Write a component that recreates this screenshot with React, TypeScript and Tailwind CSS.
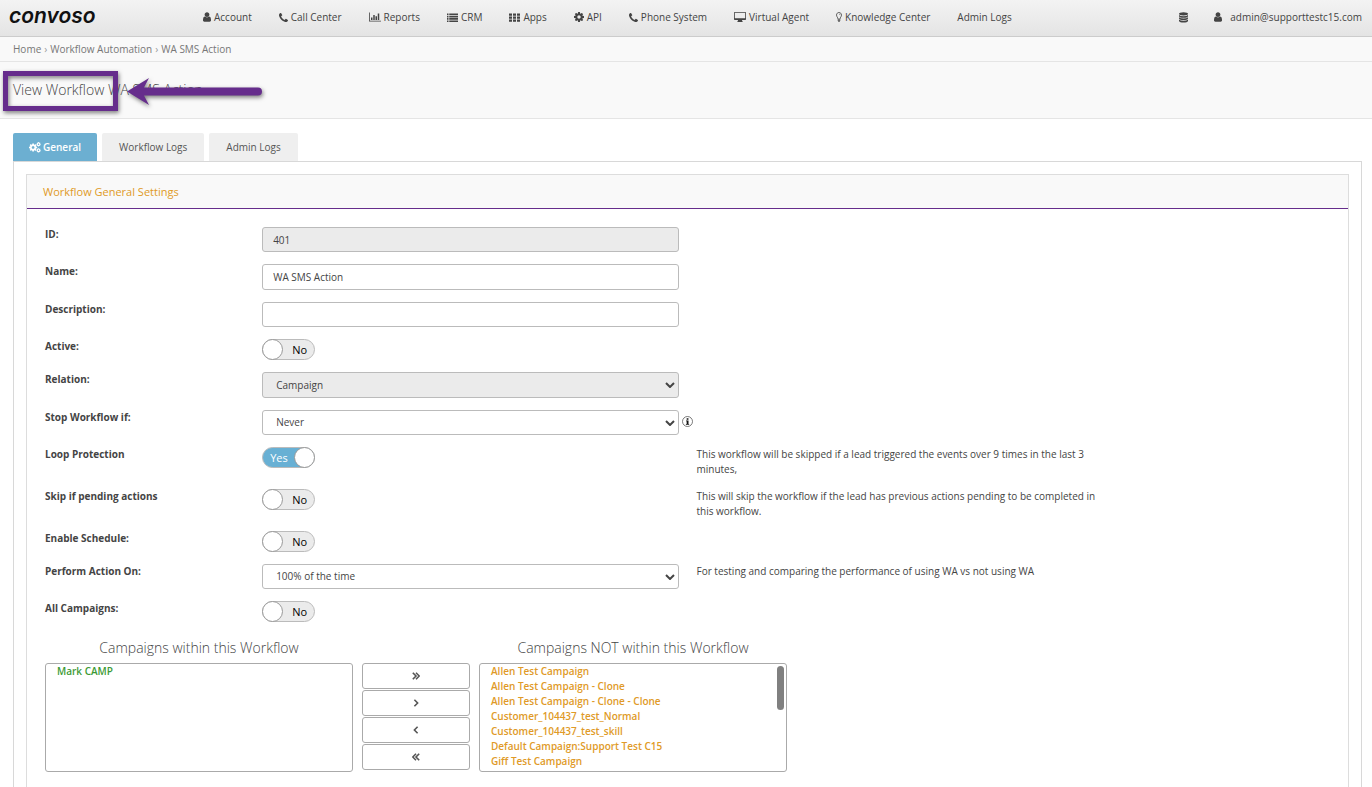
import React, { useState } from 'react';

const USER_PATH =
  'M1536 1399q0 109-62.5 187t-150.5 78h-854q-88 0-150.5-78t-62.5-187q0-85 8.5-160.5t31.5-152 58.5-131 94-89 134.5-34.5q131 128 313 128t313-128q76 0 134.5 34.5t94 89 58.5 131 31.5 152 8.5 160.5zm-256-887q0 159-112.5 271.5t-271.5 112.5-271.5-112.5-112.5-271.5 112.5-271.5 271.5-112.5 271.5 112.5 112.5 271.5z';
const PHONE_PATH =
  'M1408 1240q0 27-10 70.5t-21 68.5q-21 50-122 106-94 51-186 51-27 0-52.5-3.5t-57.5-12.5-47.5-14.5-55.5-20.5-49-18q-98-35-175-83-128-79-264.5-215.5t-215.5-264.5q-48-77-83-175-3-9-18-49t-20.5-55.5-14.5-47.5-12.5-57.5-3.5-52.5q0-92 51-186 56-101 106-122 25-11 68.5-21t70.5-10q14 0 21 3 18 6 53 76 11 19 30 54t35 63.5 31 53.5q3 4 17.5 25t21.5 35.5 7 28.5q0 20-28.5 50t-62 55-62 53-28.5 46q0 9 5 22.5t8.5 20.5 14 24 11.5 19q76 137 174 235t235 174q2 1 19 11.5t24 14 20.5 8.5 22.5 5q18 0 46-28.5t53-62 55-62 50-28.5q14 0 28.5 7t35.5 21.5 25 17.5q25 15 53.5 31t63.5 35 54 30q70 35 76 53 3 7 3 21z';
const COG_PATH =
  'M1152 896q0-106-75-181t-181-75-181 75-75 181 75 181 181 75 181-75 75-181zm512-109v222q0 12-8 23t-20 13l-185 28q-19 54-39 91 35 50 107 138 10 12 10 25t-9 23q-27 37-99 108t-94 71q-12 0-26-9l-138-108q-44 23-91 38-16 136-29 186-7 28-36 28h-222q-14 0-24.5-8.5t-11.5-21.5l-28-184q-49-16-90-37l-141 107q-10 9-25 9-14 0-25-11-126-114-165-168-7-10-7-23 0-12 8-23 15-21 51-66.5t54-70.5q-27-50-41-99l-183-27q-13-2-21-12.5t-8-23.5v-222q0-12 8-23t19-13l186-28q14-46 39-92-40-57-107-138-10-12-10-24 0-10 9-23 26-36 98.5-107.5t94.5-71.5q13 0 26 10l138 107q44-23 91-38 16-136 29-186 7-28 36-28h222q14 0 24.5 8.5t11.5 21.5l28 184q49 16 90 37l142-107q9-9 24-9 13 0 25 10 129 119 165 170 7 8 7 22 0 12-8 23-15 21-51 66.5t-54 70.5q26 50 41 98l183 28q13 2 21 12.5t8 23.5z';

const UserIcon = () => (
  <svg viewBox="256 128 1280 1536" className="w-[8px] h-[10px] fill-current">
    <path d={USER_PATH} />
  </svg>
);

const PhoneIcon = () => (
  <svg viewBox="0 128 1408 1408" className="w-[9px] h-[9px] fill-current">
    <path d={PHONE_PATH} />
  </svg>
);

const CogIcon = () => (
  <svg viewBox="128 128 1536 1536" className="w-[10px] h-[10px] fill-current">
    <path d={COG_PATH} />
  </svg>
);

const CogsIcon = () => (
  <svg viewBox="0 0 24 22" className="w-[12px] h-[11px] fill-current">
    <path d={COG_PATH} transform="translate(-1.4 1.4) scale(0.0107)" />
    <path d={COG_PATH} transform="translate(14 -0.6) scale(0.0057)" />
    <path d={COG_PATH} transform="translate(14 11.6) scale(0.0057)" />
  </svg>
);

const ChartIcon = () => (
  <svg viewBox="0 0 24 20" className="w-[12px] h-[10px] fill-current">
    <path d="M0 1h1.6v16.6H24V19H0zM4 11h3v5H4zM8.500 6h3v10h-3zM13 8.500h3V16h-3zM17.500 3h3v13h-3z" />
  </svg>
);

const ListIcon = () => (
  <svg viewBox="0 0 22 18" className="w-[11px] h-[9px] fill-current">
    <path d="M0 1h3v3.200H0zM0 5.600h3v3.200H0zM0 10.200h3v3.200H0zM0 14.800h3V18H0zM4.500 1H22v3.200H4.500zM4.500 5.600H22v3.200H4.500zM4.500 10.200H22v3.200H4.500zM4.500 14.800H22V18H4.500z" />
  </svg>
);

const GridIcon = () => (
  <svg viewBox="0 0 22 18" className="w-[11px] h-[9px] fill-current">
    <path d="M0 1h6v4.400H0zM8 1h6v4.400H8zM16 1h6v4.400h-6zM0 7h6v4.400H0zM8 7h6v4.400H8zM16 7h6v4.400h-6zM0 13h6v4.400H0zM8 13h6v4.400H8zM16 13h6v4.400h-6z" />
  </svg>
);

const DesktopIcon = () => (
  <svg viewBox="0 0 24 20" className="w-[12px] h-[10px] fill-current">
    <path d="M1.500 0h21Q24 0 24 1.500v13q0 1.500-1.500 1.500H16l.5 2.500 1 .5v1h-11v-1l1-.5L8 16H1.500Q0 16 0 14.500v-13Q0 0 1.500 0zM1.600 1.600v10.800h20.800V1.600z" fillRule="evenodd" />
  </svg>
);

const BulbIcon = () => (
  <svg viewBox="0 0 12 20" className="w-[6px] h-[10px] fill-none stroke-current">
    <path d="M4 14c0-3-3-4.500-3-8 0-3 2.300-5 5-5s5 2 5 5c0 3.500-3 5-3 8" strokeWidth="1.600" />
    <path d="M6 4q2 0 2.200 2" strokeWidth="1" />
    <path d="M3.400 14.500h5.200M3.400 16.700h5.200M4.500 18.900h3" strokeWidth="1.800" />
  </svg>
);

const DatabaseIcon = () => (
  <svg viewBox="0 0 18 22" className="w-[9px] h-[11px] fill-current">
    <ellipse cx="9" cy="3.600" rx="9" ry="3.200" />
    <path d="M0 5.800q2.500 2.500 9 2.500t9-2.500v2.700q-1.500 3-9 3t-9-3z" />
    <path d="M0 10.300q2.500 2.500 9 2.500t9-2.500V13q-1.500 3-9 3t-9-3z" />
    <path d="M0 14.800q2.500 2.500 9 2.500t9-2.500v3q-1.500 3.400-9 3.400t-9-3.400z" />
  </svg>
);

const InfoIcon = () => (
  <svg viewBox="0 0 22 22" className="w-[11px] h-[11px]">
    <circle cx="11" cy="11" r="10" fill="white" stroke="#444" strokeWidth="1.400" />
    <path d="M9.300 4.500h3.600v3H9.300zM8 9h5v6.800h1.300V17.500H7.800v-1.700h1.500v-5.100H8z" fill="#111" />
  </svg>
);

const navItems = [
  { label: 'Account', icon: <UserIcon /> },
  { label: 'Call Center', icon: <PhoneIcon /> },
  { label: 'Reports', icon: <ChartIcon /> },
  { label: 'CRM', icon: <ListIcon /> },
  { label: 'Apps', icon: <GridIcon /> },
  { label: 'API', icon: <CogIcon /> },
  { label: 'Phone System', icon: <PhoneIcon /> },
  { label: 'Virtual Agent', icon: <DesktopIcon /> },
  { label: 'Knowledge Center', icon: <BulbIcon /> },
  { label: 'Admin Logs', icon: null },
];

const otherCampaigns = [
  'Allen Test Campaign',
  'Allen Test Campaign - Clone',
  'Allen Test Campaign - Clone - Clone',
  'Customer_104437_test_Normal',
  'Customer_104437_test_skill',
  'Default Campaign:Support Test C15',
  'Giff Test Campaign',
];

const moveButtons = [
  { label: 'Add all', path: 'M1 1l4 4-4 4M5 1l4 4-4 4' },
  { label: 'Add selected', path: 'M3 1l4 4-4 4' },
  { label: 'Remove selected', path: 'M7 1L3 5l4 4' },
  { label: 'Remove all', path: 'M5 1L1 5l4 4M9 1L5 5l4 4' },
];

interface RowProps {
  id: string;
  label: string;
  help?: string;
  children: React.ReactNode;
}

const Row: React.FC<RowProps> = ({ id, label, help, children }) => (
  <div className="flex items-start mb-3">
    <label htmlFor={id} className="w-1/6 font-bold">{label}</label>
    <div className="w-1/3 pr-[17px] relative">{children}</div>
    {help && <p className="w-1/3 pr-[17px]">{help}</p>}
  </div>
);

const Toggle: React.FC<{ id: string; on?: boolean }> = ({ id, on = false }) => {
  const [checked, setChecked] = useState(on);
  return (
    <div className="relative w-[53px] h-[21px]">
      <input
        id={id}
        type="checkbox"
        checked={checked}
        onChange={() => setChecked(!checked)}
        className="block appearance-none w-full h-full rounded-full border border-[#bbb] bg-[#ebebeb] checked:bg-[#68b0d4]"
      />
      <span
        className={`absolute top-[3px] pointer-events-none text-[11px] ${
          checked ? 'left-2 text-white' : 'right-2 text-black'
        }`}
      >
        {checked ? 'Yes' : 'No'}
      </span>
      <span
        className={`absolute top-0 w-[21px] h-[21px] rounded-full border border-[#999] bg-white pointer-events-none ${
          checked ? 'right-0' : 'left-0'
        }`}
      />
    </div>
  );
};

interface SelectProps {
  id: string;
  value: string;
  className: string;
  disabled?: boolean;
}

const Select: React.FC<SelectProps> = ({ id, value, className, disabled }) => (
  <div className="relative">
    <select
      id={id}
      disabled={disabled}
      className={`block appearance-none w-full px-[13px] border border-[#bbb] rounded-[3px] opacity-100 text-[#444] ${className}`}
    >
      <option>{value}</option>
    </select>
    <svg viewBox="0 0 10 6" className="absolute right-1 top-[10px] w-[10px] h-[6px] pointer-events-none">
      <path d="M1 1l4 4 4-4" fill="none" stroke="#444" strokeWidth="2" />
    </svg>
  </div>
);

const App: React.FC = () => {
  return (
    <div className="min-h-screen flex flex-col bg-white font-['Open_Sans',sans-serif] text-[10px] leading-[15px] font-medium text-[#444]">
      <header className="flex items-center h-[37px] pb-[2px] bg-linear-to-b from-[#f3f3f3] to-[#e4e4e4] border-b border-[#ccc]">
        <div className="w-[203px] pl-[9px] pb-[2px] font-[Inter,sans-serif] text-[21px] leading-[26px] font-semibold italic text-[#111]">convoso</div>
        <nav className="flex gap-[27px]">
          {navItems.map((item) => (
            <a key={item.label} href="#" className="flex items-center gap-[3px] whitespace-nowrap">
              {item.icon}
              {item.label}
            </a>
          ))}
        </nav>
        <div className="ml-auto flex items-center pr-[10px]">
          <a href="#" aria-label="Data" className="mr-[26px]"><DatabaseIcon /></a>
          <a href="#" className="flex items-center gap-2"><UserIcon />admin@supporttestc15.com</a>
        </div>
      </header>

      <div className="flex items-center h-[25px] px-[13px] bg-[#f9f9f9] border-b border-[#e5e5e5] font-normal text-[#777]">
        <a href="#">Home</a>
        <span className="px-[3px] text-[#999]">›</span>
        <a href="#">Workflow Automation</a>
        <span className="px-[3px] text-[#999]">›</span>
        <span>WA SMS Action</span>
      </div>

      <div className="relative h-[57px] px-[13px] pt-[18px] bg-[#f9f9f9] border-b border-[#e5e5e5]">
        <h1 className="text-[14px] leading-5 font-light">View Workflow WA SMS Action</h1>
        <div className="absolute left-[3px] top-[9px] w-[115px] h-[40px] border-[5px] border-[#662d8c] drop-shadow-[1px_2px_2px_rgba(0,0,0,0.5)]" />
        <svg viewBox="0 0 140 34" className="absolute left-[126px] top-[13px] w-[140px] h-[34px] drop-shadow-[1px_2px_2px_rgba(0,0,0,0.5)]">
          <path d="M1 16.500L23 3l-5 9.500H132a4 4 0 0 1 0 8H18L23 30z" fill="#662d8c" />
        </svg>
      </div>

      <main className="flex-1 flex flex-col pt-[14px] pl-[13px] pr-[10px]">
        <div className="flex gap-[5px] text-[#555]">
          <button className="flex items-center gap-[2px] h-[29px] -mb-px px-4 rounded-t-xs bg-[#6cafd1] font-semibold text-white">
            <CogsIcon />
            General
          </button>
          <button className="h-[28px] px-[17px] rounded-t-xs bg-[#efefef]">Workflow Logs</button>
          <button className="h-[28px] px-[17px] rounded-t-xs bg-[#efefef]">Admin Logs</button>
        </div>

        <div className="flex-1 flex flex-col px-3 pt-3 border border-b-0 border-[#d8d8d8]">
          <section className="flex-1 border border-b-0 border-[#ddd]">
            <h2 className="h-[34px] px-4 leading-[34px] bg-[#f9f9f9] border-b border-[#662d8c] text-[11px] font-medium text-[#e09a27]">
              Workflow General Settings
            </h2>

            <form className="pl-[18px] pt-[18px]">
              <Row id="wf-id" label="ID:">
                <input id="wf-id" disabled defaultValue="401" className="block w-full h-[25px] px-[10px] border border-[#bbb] rounded-[3px] bg-[#ebebeb]" />
              </Row>
              <Row id="wf-name" label="Name:">
                <input id="wf-name" defaultValue="WA SMS Action" className="block w-full h-[26px] px-[10px] border border-[#bbb] rounded-[3px]" />
              </Row>
              <Row id="wf-description" label="Description:">
                <input id="wf-description" className="block w-full h-[25px] px-[10px] border border-[#bbb] rounded-[3px]" />
              </Row>
              <Row id="wf-active" label="Active:">
                <Toggle id="wf-active" />
              </Row>
              <Row id="wf-relation" label="Relation:">
                <Select id="wf-relation" value="Campaign" disabled className="h-[26px] bg-[#ebebeb]" />
              </Row>
              <Row id="wf-stop" label="Stop Workflow if:">
                <Select id="wf-stop" value="Never" className="h-[25px] bg-white" />
                <span className="absolute right-[3px] top-[6px]"><InfoIcon /></span>
              </Row>
              <Row id="wf-loop" label="Loop Protection" help="This workflow will be skipped if a lead triggered the events over 9 times in the last 3 minutes,">
                <Toggle id="wf-loop" on />
              </Row>
              <Row id="wf-skip" label="Skip if pending actions" help="This will skip the workflow if the lead has previous actions pending to be completed in this workflow.">
                <Toggle id="wf-skip" />
              </Row>
              <Row id="wf-schedule" label="Enable Schedule:">
                <Toggle id="wf-schedule" />
              </Row>
              <Row id="wf-perform" label="Perform Action On:" help="For testing and comparing the performance of using WA vs not using WA">
                <Select id="wf-perform" value="100% of the time" className="h-[25px] bg-white" />
              </Row>
              <Row id="wf-all" label="All Campaigns:">
                <Toggle id="wf-all" />
              </Row>

              <div className="flex items-end gap-[9px] pt-1">
                <div className="w-[308px]">
                  <label htmlFor="campaigns-in" className="block mb-[5px] text-center text-[14px] leading-5 font-light">
                    Campaigns within this Workflow
                  </label>
                  <select id="campaigns-in" multiple className="block w-full h-[109px] px-[9px] border border-[#aaa] rounded-[3px] overflow-hidden">
                    <option className="p-0 px-[2px] min-h-[15px] leading-[15px] font-semibold text-[#3c9a35]">Mark CAMP</option>
                  </select>
                </div>
                <div className="w-[108px] h-[109px] flex flex-col gap-px">
                  {moveButtons.map((button) => (
                    <button
                      key={button.label}
                      type="button"
                      aria-label={button.label}
                      className="h-[26px] flex items-center justify-center border border-[#aaa] rounded-[3px]"
                    >
                      <svg viewBox="0 0 10 10" className="w-[8px] h-[8px]">
                        <path d={button.path} fill="none" stroke="#555" strokeWidth="2" />
                      </svg>
                    </button>
                  ))}
                </div>
                <div className="relative w-[308px]">
                  <label htmlFor="campaigns-out" className="block mb-[5px] text-center text-[14px] leading-5 font-light">
                    Campaigns NOT within this Workflow
                  </label>
                  <select id="campaigns-out" multiple className="block w-full h-[109px] px-[9px] border border-[#aaa] rounded-[3px] overflow-hidden">
                    {otherCampaigns.map((name) => (
                      <option key={name} className="p-0 px-[2px] min-h-[15px] leading-[15px] font-semibold text-[#e09a27]">{name}</option>
                    ))}
                  </select>
                  <div className="absolute right-[3px] bottom-[62px] w-[7px] h-[44px] rounded-full bg-[#808080]" />
                </div>
              </div>
            </form>
          </section>
        </div>
      </main>
    </div>
  );
};

export default App;
